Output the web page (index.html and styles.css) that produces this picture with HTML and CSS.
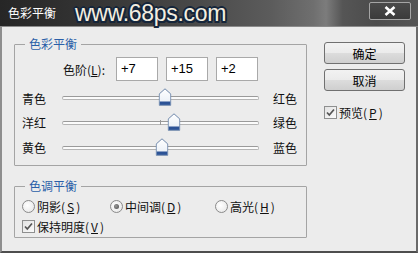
FILE: index.html
```html
<!DOCTYPE html>
<html lang="zh-CN">
<head>
    <meta charset="UTF-8">
    <title>色彩平衡</title>
    <link rel="stylesheet" href="styles.css">
</head>
<body>
    <div class="window">
        <div class="titlebar">
            <span class="title">色彩平衡</span>
            <span class="watermark">www.68ps.com</span>
            <span class="close">
                <svg width="12" height="10" viewBox="0 0 12 10"><path d="M1.5 1 L10.5 9 M10.5 1 L1.5 9" stroke="#fff" stroke-width="2.6"/></svg>
            </span>
        </div>

        <div class="main">
            <div class="left">
                <fieldset class="group balance">
                    <legend>色彩平衡</legend>
                    <div class="levels">
                        <span class="levels-label">色阶(<u>L</u>):</span>
                        <div class="field">+7</div>
                        <div class="field">+15</div>
                        <div class="field">+2</div>
                    </div>

                    <div class="slider-row">
                        <span class="lbl">青色</span>
                        <div class="track">
                            <span class="tick"></span>
                            <span class="thumb" style="left: 52.5%"><svg width="13" height="18" viewBox="0 0 13 18"><use href="#thumb"/></svg></span>
                        </div>
                        <span class="lbl-right">红色</span>
                    </div>
                    <div class="slider-row">
                        <span class="lbl">洋红</span>
                        <div class="track">
                            <span class="tick"></span>
                            <span class="thumb" style="left: 57%"><svg width="13" height="18" viewBox="0 0 13 18"><use href="#thumb"/></svg></span>
                        </div>
                        <span class="lbl-right">绿色</span>
                    </div>
                    <div class="slider-row">
                        <span class="lbl">黄色</span>
                        <div class="track">
                            <span class="tick"></span>
                            <span class="thumb" style="left: 51%"><svg width="13" height="18" viewBox="0 0 13 18"><use href="#thumb"/></svg></span>
                        </div>
                        <span class="lbl-right">蓝色</span>
                    </div>
                </fieldset>

                <fieldset class="group tone">
                    <legend>色调平衡</legend>
                    <div class="tones">
                        <span class="option"><span class="radio"></span>阴影(<u>S</u>)</span>
                        <span class="option"><span class="radio on"></span>中间调(<u>D</u>)</span>
                        <span class="option"><span class="radio"></span>高光(<u>H</u>)</span>
                    </div>
                    <div class="option check-row">
                        <span class="checkbox"><svg width="11" height="11" viewBox="0 0 11 11"><use href="#tick"/></svg></span>保持明度(<u>V</u>)
                    </div>
                </fieldset>
            </div>

            <div class="side">
                <button class="btn">确定</button>
                <button class="btn">取消</button>
                <div class="option preview">
                    <span class="checkbox"><svg width="11" height="11" viewBox="0 0 11 11"><use href="#tick"/></svg></span>预览(<u>P</u>)
                </div>
            </div>
        </div>
    </div>

    <!-- shared shapes -->
    <svg width="0" height="0" class="defs">
        <defs>
            <linearGradient id="thumbfill" x1="0" y1="0" x2="0" y2="1">
                <stop offset="0" stop-color="#ffffff"/>
                <stop offset="1" stop-color="#e6edf5"/>
            </linearGradient>
            <g id="thumb">
                <path d="M6.5 0.8 L12.3 6 L12.3 17.3 L0.7 17.3 L0.7 6 Z" fill="url(#thumbfill)" stroke="#6f88ab" stroke-width="1"/>
                <rect x="1.2" y="13.5" width="10.6" height="3.4" fill="#2c5396"/>
            </g>
            <path id="tick" d="M2 5.5 L4.3 8 L9 2.5" fill="none" stroke="#555" stroke-width="1.7"/>
        </defs>
    </svg>
</body>
</html>
```

FILE: styles.css
```css
body {
    margin: 0;
    font-family: "Noto Sans CJK SC", "Liberation Sans", sans-serif;
    font-size: 12px;
    color: #111;
}

.window {
    width: 418px;
    height: 253px;
    display: flex;
    flex-direction: column;
    background-color: #ececec;
}

/* title bar */

.titlebar {
    height: 26px;
    flex: none;
    display: flex;
    align-items: center;
    border-bottom: 1px solid #8b8b8b;
    background: linear-gradient(to right, #262626 0%, #333 20%, #474747 45%, #5c5c5c 65%, #6f6f6f 75%, #7c7c7c 78%, #555 82%, #4c4c4c 90%, #555 100%);
    color: #fff;
}

.title {
    margin-left: 8px;
    line-height: 12px;
}

.watermark {
    margin-left: 19px;
    font-family: "Liberation Sans", Arial, sans-serif;
    font-size: 23px;
    line-height: 22px;
    letter-spacing: -0.3px;
    color: #f3eee0;
    text-shadow: 2px 0 0 #15253a, -2px 0 0 #15253a, 0 2px 0 #15253a, 0 -2px 0 #15253a,
                 1.5px 1.5px 0 #15253a, -1.5px -1.5px 0 #15253a, 1.5px -1.5px 0 #15253a, -1.5px 1.5px 0 #15253a;
}

.close {
    margin-left: auto;
    margin-right: 7px;
    align-self: flex-start;
    margin-top: 2px;
    width: 40px;
    height: 16px;
    display: flex;
    align-items: center;
    justify-content: center;
    border: 1px solid #a5a5a5;
    border-radius: 2px;
    background: linear-gradient(#4a4a4a, #3b3b3b);
}

/* body */

.main {
    flex: 1;
    display: flex;
    border-left: 2px solid #8e8e8e;
    border-right: 2px solid #6a6a6a;
    border-bottom: 2px solid #4e4e4e;
}

.left {
    padding-left: 12px;
    width: 293px;
}

.group {
    margin: 0;
    padding: 0;
    min-width: 0;
    border: 1px solid #a4a4a4;
    border-radius: 1px;
}

.group legend {
    margin-left: 10px;
    padding: 0 4px;
    line-height: 12px;
    color: #2b5fa8;
}

.balance {
    margin-top: 11px;
    padding-bottom: 5px;
}

.tone {
    margin-top: 14px;
    padding-bottom: 3px;
}

.levels {
    display: flex;
    align-items: center;
    gap: 8px;
    height: 24px;
    margin-top: 7px;
    padding-left: 48px;
}

.levels-label {
    width: 43px;
    margin-right: 2px;
    white-space: nowrap;
}

.field {
    width: 36px;
    height: 22px;
    padding-left: 4px;
    border: 1px solid #a9a9a9;
    background-color: #fff;
    font-family: "Liberation Sans", Arial, sans-serif;
    font-size: 13px;
    line-height: 22px;
    color: #000;
}

.slider-row {
    display: flex;
    align-items: center;
    height: 24px;
    padding-left: 7px;
}

.levels + .slider-row {
    margin-top: 5px;
}

.slider-row + .slider-row {
    height: 25px;
}

.lbl {
    width: 40px;
}

.lbl-right {
    margin-left: 14px;
}

.track {
    position: relative;
    width: 195px;
    height: 2px;
    border: 1px solid #b4b4b4;
    border-top-color: #9a9a9a;
    border-radius: 2px;
    background-color: #fbfbfb;
}

.tick {
    position: absolute;
    left: 97px;
    top: -2px;
    width: 1px;
    height: 5px;
    background-color: #9a9a9a;
}

.thumb {
    position: absolute;
    top: -9px;
    width: 13px;
    height: 18px;
    transform: translateX(-50%);
}

.thumb svg {
    display: block;
}

.tones {
    display: grid;
    grid-template-columns: 88px 105px auto;
    height: 16px;
    margin-top: 6px;
    padding-left: 7px;
}

.option {
    display: flex;
    align-items: center;
    gap: 2px;
    white-space: nowrap;
}

.check-row {
    height: 16px;
    margin-top: 4px;
    padding-left: 7px;
}

.radio {
    width: 11px;
    height: 11px;
    border: 1px solid #8a8a8a;
    border-radius: 50%;
    background: radial-gradient(circle at 40% 40%, #ffffff, #e4e4e4);
    display: flex;
    align-items: center;
    justify-content: center;
}

.radio.on::after {
    content: '';
    width: 5px;
    height: 5px;
    border-radius: 50%;
    background: radial-gradient(circle at 40% 40%, #9a9a9a, #4a4a4a);
}

.checkbox {
    width: 11px;
    height: 11px;
    border: 1px solid #8e8f8f;
    background: linear-gradient(135deg, #e2e2e2, #fbfbfb);
    display: flex;
    align-items: center;
    justify-content: center;
}

.checkbox svg {
    display: block;
}

/* buttons */

.side {
    width: 81px;
    margin-left: 17px;
    padding-top: 15px;
    display: flex;
    flex-direction: column;
}

.btn {
    height: 22px;
    margin-bottom: 5px;
    padding: 0;
    border: 1px solid #707070;
    border-radius: 3px;
    background: linear-gradient(#f2f2f2 0%, #ebebeb 48%, #dcdcdc 52%, #cfcfcf 100%);
    font-family: "Noto Sans CJK SC", sans-serif;
    font-size: 12px;
    color: #000;
}

.preview {
    margin-top: 9px;
    height: 14px;
}

.defs {
    position: absolute;
}
```
